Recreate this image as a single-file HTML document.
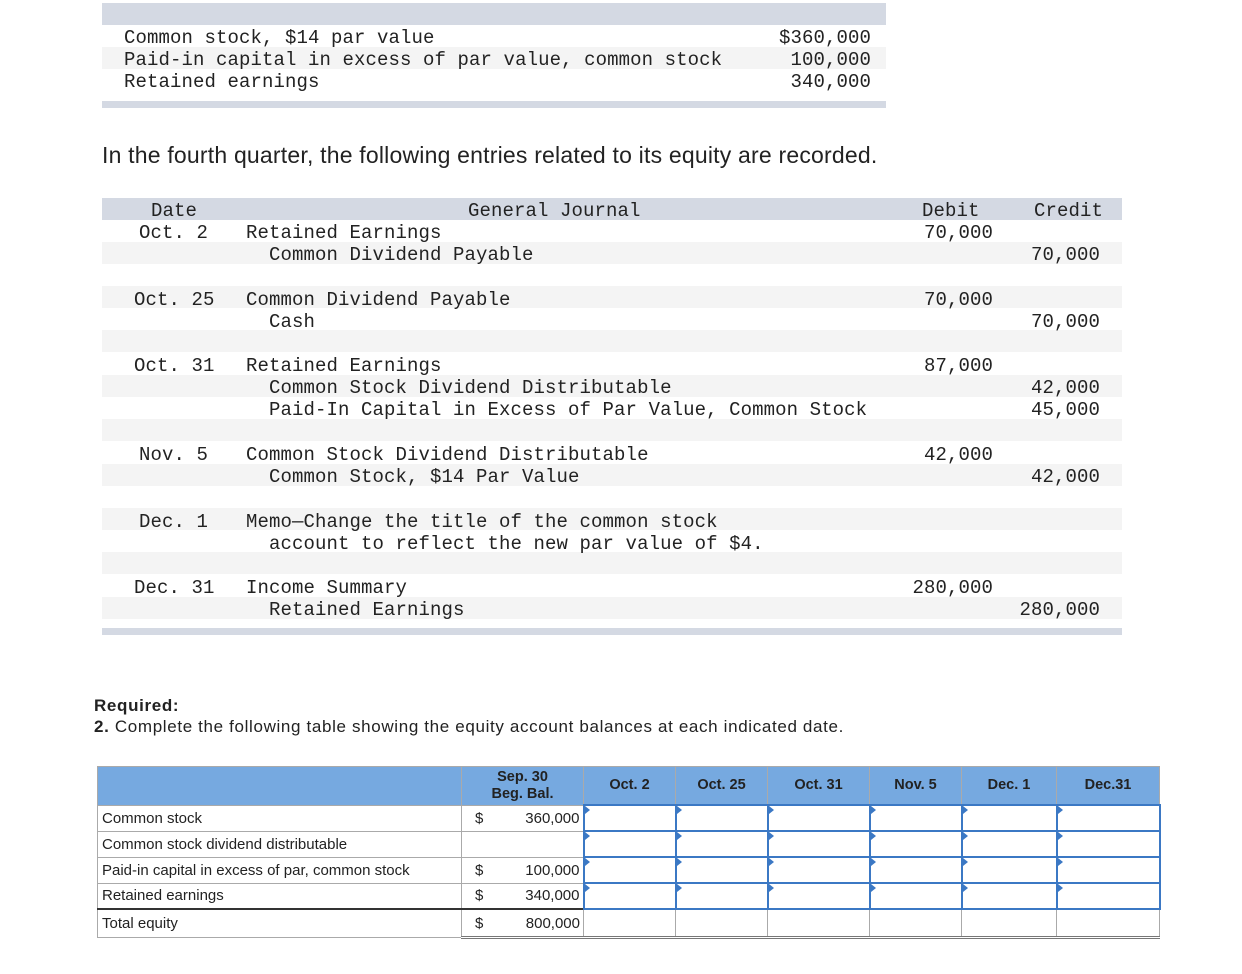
<!DOCTYPE html>
<html><head><meta charset="utf-8"><style>
body{margin:0;width:1242px;height:974px;background:#fff;position:relative;overflow:hidden;font-family:"Liberation Sans",sans-serif}
.m{font-family:"Liberation Mono",monospace;font-size:19px;color:#222;position:absolute;white-space:pre;line-height:22px;margin-top:2px;letter-spacing:0.1px}
.bar{position:absolute;background:#d4d9e3}
.g{position:absolute;background:#f4f4f4}
.r{text-align:right}
table{position:absolute;left:97px;top:766px;border-collapse:collapse;font-size:15px;color:#222}
td,th{border:1px solid #aaa;padding:0}
th{background:#76a9e0;font-weight:bold;height:37px;font-size:14.5px;line-height:17px}
td{height:24px}
td.in{border:2px solid #3b78c4;position:relative}
td.in:before{content:"";position:absolute;left:0;top:0;border-left:5px solid #3b78c4;border-top:4px solid transparent;border-bottom:4px solid transparent}
</style></head><body>
<div class="bar" style="left:102px;top:3px;width:784px;height:22px"></div>
<div class="g" style="left:102px;top:47px;width:784px;height:22px"></div>
<div class="bar" style="left:102px;top:101px;width:784px;height:7px"></div>
<div class="m" style="left:124px;top:25px">Common stock, $14 par value
Paid-in capital in excess of par value, common stock
Retained earnings</div>
<div class="m r" style="left:740px;top:25px;width:131px">$360,000
100,000
340,000</div>
<div style="position:absolute;left:102px;top:142px;font-size:23px;letter-spacing:0.2px;color:#222">In the fourth quarter, the following entries related to its equity are recorded.</div>

<div class="bar" style="left:102px;top:198px;width:1020px;height:22px"></div>
<div class="g" style="left:102px;top:242px;width:1020px;height:22px"></div>
<div class="g" style="left:102px;top:286px;width:1020px;height:22px"></div>
<div class="g" style="left:102px;top:330px;width:1020px;height:22px"></div>
<div class="g" style="left:102px;top:375px;width:1020px;height:22px"></div>
<div class="g" style="left:102px;top:419px;width:1020px;height:22px"></div>
<div class="g" style="left:102px;top:464px;width:1020px;height:22px"></div>
<div class="g" style="left:102px;top:508px;width:1020px;height:22px"></div>
<div class="g" style="left:102px;top:552px;width:1020px;height:22px"></div>
<div class="g" style="left:102px;top:597px;width:1020px;height:22px"></div>
<div class="bar" style="left:102px;top:628px;width:1020px;height:7px"></div>

<div class="m" style="left:151px;top:198px">Date</div>
<div class="m" style="left:468px;top:198px">General Journal</div>
<div class="m" style="left:922px;top:198px">Debit</div>
<div class="m" style="left:1034px;top:198px">Credit</div>

<div class="m" style="left:139px;top:220px">Oct. 2</div>
<div class="m" style="left:246px;top:220px">Retained Earnings
  Common Dividend Payable</div>
<div class="m r" style="left:880px;top:220px;width:113px">70,000</div>
<div class="m r" style="left:990px;top:242px;width:110px">70,000</div>

<div class="m" style="left:134px;top:287px">Oct. 25</div>
<div class="m" style="left:246px;top:287px">Common Dividend Payable
  Cash</div>
<div class="m r" style="left:880px;top:287px;width:113px">70,000</div>
<div class="m r" style="left:990px;top:309px;width:110px">70,000</div>

<div class="m" style="left:134px;top:353px">Oct. 31</div>
<div class="m" style="left:246px;top:353px">Retained Earnings
  Common Stock Dividend Distributable
  Paid-In Capital in Excess of Par Value, Common Stock</div>
<div class="m r" style="left:880px;top:353px;width:113px">87,000</div>
<div class="m r" style="left:990px;top:375px;width:110px">42,000
45,000</div>

<div class="m" style="left:139px;top:442px">Nov. 5</div>
<div class="m" style="left:246px;top:442px">Common Stock Dividend Distributable
  Common Stock, $14 Par Value</div>
<div class="m r" style="left:880px;top:442px;width:113px">42,000</div>
<div class="m r" style="left:990px;top:464px;width:110px">42,000</div>

<div class="m" style="left:139px;top:509px">Dec. 1</div>
<div class="m" style="left:246px;top:509px">Memo—Change the title of the common stock
  account to reflect the new par value of $4.</div>

<div class="m" style="left:134px;top:575px">Dec. 31</div>
<div class="m" style="left:246px;top:575px">Income Summary
  Retained Earnings</div>
<div class="m r" style="left:880px;top:575px;width:113px">280,000</div>
<div class="m r" style="left:990px;top:597px;width:110px">280,000</div>

<div style="position:absolute;left:94px;top:695px;font-size:17px;letter-spacing:0.65px;color:#222;line-height:21px"><b>Required:</b><br><b>2.</b> Complete the following table showing the equity account balances at each indicated date.</div>

<table>
<tr><th style="width:363px"></th><th style="width:121px">Sep. 30<br>Beg. Bal.</th><th style="width:91px">Oct. 2</th><th style="width:91px">Oct. 25</th><th style="width:101px">Oct. 31</th><th style="width:91px">Nov. 5</th><th style="width:94px">Dec. 1</th><th style="width:102px">Dec.31</th></tr>
<tr><td style="padding-left:4px">Common stock</td><td><span style="float:left;margin-left:13px">$</span><span style="float:right;margin-right:3px">360,000</span></td><td class="in"></td><td class="in"></td><td class="in"></td><td class="in"></td><td class="in"></td><td class="in"></td></tr>
<tr><td style="padding-left:4px">Common stock dividend distributable</td><td></td><td class="in"></td><td class="in"></td><td class="in"></td><td class="in"></td><td class="in"></td><td class="in"></td></tr>
<tr><td style="padding-left:4px">Paid-in capital in excess of par, common stock</td><td><span style="float:left;margin-left:13px">$</span><span style="float:right;margin-right:3px">100,000</span></td><td class="in"></td><td class="in"></td><td class="in"></td><td class="in"></td><td class="in"></td><td class="in"></td></tr>
<tr><td style="padding-left:4px">Retained earnings</td><td><span style="float:left;margin-left:13px">$</span><span style="float:right;margin-right:3px">340,000</span></td><td class="in"></td><td class="in"></td><td class="in"></td><td class="in"></td><td class="in"></td><td class="in"></td></tr>
<tr style="border-top:2px solid #333"><td style="padding-left:4px;height:27px">Total equity</td><td style="border-bottom:3px double #777"><span style="float:left;margin-left:13px">$</span><span style="float:right;margin-right:3px">800,000</span></td><td style="border-bottom:3px double #777"></td><td style="border-bottom:3px double #777"></td><td style="border-bottom:3px double #777"></td><td style="border-bottom:3px double #777"></td><td style="border-bottom:3px double #777"></td><td style="border-bottom:3px double #777"></td></tr>
</table>
</body></html>
